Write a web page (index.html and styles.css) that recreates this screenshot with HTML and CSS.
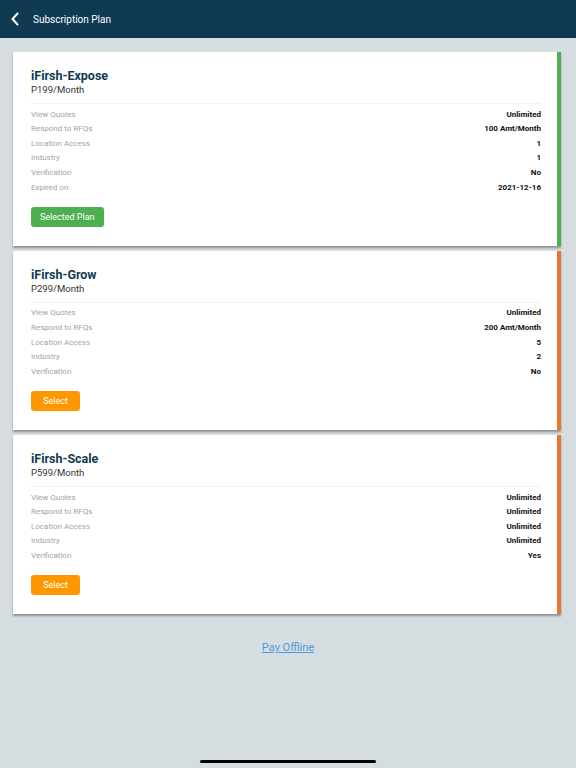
FILE: index.html
```html
<!DOCTYPE html>
<html lang="en">

<head>
	<meta charset="UTF-8">
	<title>Subscription Plan</title>
	<link rel="stylesheet" href="styles.css">
</head>

<body>
	<div class="topbar">
		<svg class="back" width="10" height="14" viewBox="0 0 10 14">
			<path d="M7.5 1.5 L2.5 7 L7.5 12.5" fill="none" stroke="#fff" stroke-width="2" stroke-linecap="round" stroke-linejoin="round" />
		</svg>
		<span class="topbar-title">Subscription Plan</span>
	</div>

	<div class="plans">
		<div class="plan plan-active">
			<div class="plan-name">iFirsh-Expose</div>
			<div class="plan-price">P199/Month</div>
			<div class="plan-rows">
				<div class="row"><span>View Quotes</span><b>Unlimited</b></div>
				<div class="row"><span>Respond to RFQs</span><b>100 Amt/Month</b></div>
				<div class="row"><span>Location Access</span><b>1</b></div>
				<div class="row"><span>Industry</span><b>1</b></div>
				<div class="row"><span>Verification</span><b>No</b></div>
				<div class="row"><span>Expired on</span><b>2021-12-16</b></div>
			</div>
			<button class="btn btn-selected">Selected Plan</button>
		</div>

		<div class="plan">
			<div class="plan-name">iFirsh-Grow</div>
			<div class="plan-price">P299/Month</div>
			<div class="plan-rows">
				<div class="row"><span>View Quotes</span><b>Unlimited</b></div>
				<div class="row"><span>Respond to RFQs</span><b>200 Amt/Month</b></div>
				<div class="row"><span>Location Access</span><b>5</b></div>
				<div class="row"><span>Industry</span><b>2</b></div>
				<div class="row"><span>Verification</span><b>No</b></div>
			</div>
			<button class="btn btn-select">Select</button>
		</div>

		<div class="plan">
			<div class="plan-name">iFirsh-Scale</div>
			<div class="plan-price">P599/Month</div>
			<div class="plan-rows">
				<div class="row"><span>View Quotes</span><b>Unlimited</b></div>
				<div class="row"><span>Respond to RFQs</span><b>Unlimited</b></div>
				<div class="row"><span>Location Access</span><b>Unlimited</b></div>
				<div class="row"><span>Industry</span><b>Unlimited</b></div>
				<div class="row"><span>Verification</span><b>Yes</b></div>
			</div>
			<button class="btn btn-select">Select</button>
		</div>
	</div>

	<div class="offline">
		<a href="#">Pay Offline</a>
	</div>

	<div class="home-bar"></div>
</body>

</html>
```

FILE: styles.css
```css
body {
	margin: 0;
	height: 768px;
	background-color: #d6dde1;
	font-family: Roboto, "Liberation Sans", sans-serif;
	display: flex;
	flex-direction: column;
	overflow: hidden;
}

.topbar {
	height: 38px;
	background-color: #0f3a51;
	display: flex;
	align-items: center;
	padding-left: 10px;
	box-sizing: border-box;
}

.back {
	display: block;
	margin-right: 13px;
}

.topbar-title {
	color: #fff;
	font-size: 10px;
}

.plans {
	padding: 14px 15px 0 13px;
	display: flex;
	flex-direction: column;
	gap: 5px;
}

.plan {
	background-color: #fff;
	border-right: 4px solid #ec7532;
	padding: 16px 16px 19px 18px;
	box-shadow: 0 1.5px 2px rgba(0, 0, 0, 0.35);
}

.plan-active {
	border-right-color: #4caf50;
}

.plan-name {
	font-size: 12.5px;
	line-height: 16px;
	font-weight: bold;
	color: #123a50;
}

.plan-price {
	font-size: 9.5px;
	line-height: 12px;
	color: #333;
	padding-bottom: 7px;
	border-bottom: 1px solid #f1f1f1;
}

.plan-rows {
	margin-top: 3.7px;
	margin-bottom: 11.5px;
}

.row {
	display: flex;
	justify-content: space-between;
	font-size: 8px;
	line-height: 14.6px;
	color: #a3a3a3;
}

.row b {
	color: #111;
}

.btn {
	display: block;
	height: 20px;
	border: none;
	border-radius: 3px;
	color: #fff;
	font-family: inherit;
	font-size: 9px;
	padding: 0 9px;
}

.btn-selected {
	background-color: #4caf50;
}

.btn-select {
	background-color: #ff9800;
	width: 49px;
}

.offline {
	text-align: center;
	margin-top: 27px;
	font-size: 11px;
}

.offline a {
	color: #4a9ee0;
}

.home-bar {
	width: 176px;
	height: 3px;
	border-radius: 2px;
	background-color: #000;
	margin: auto auto 5px;
}
```
